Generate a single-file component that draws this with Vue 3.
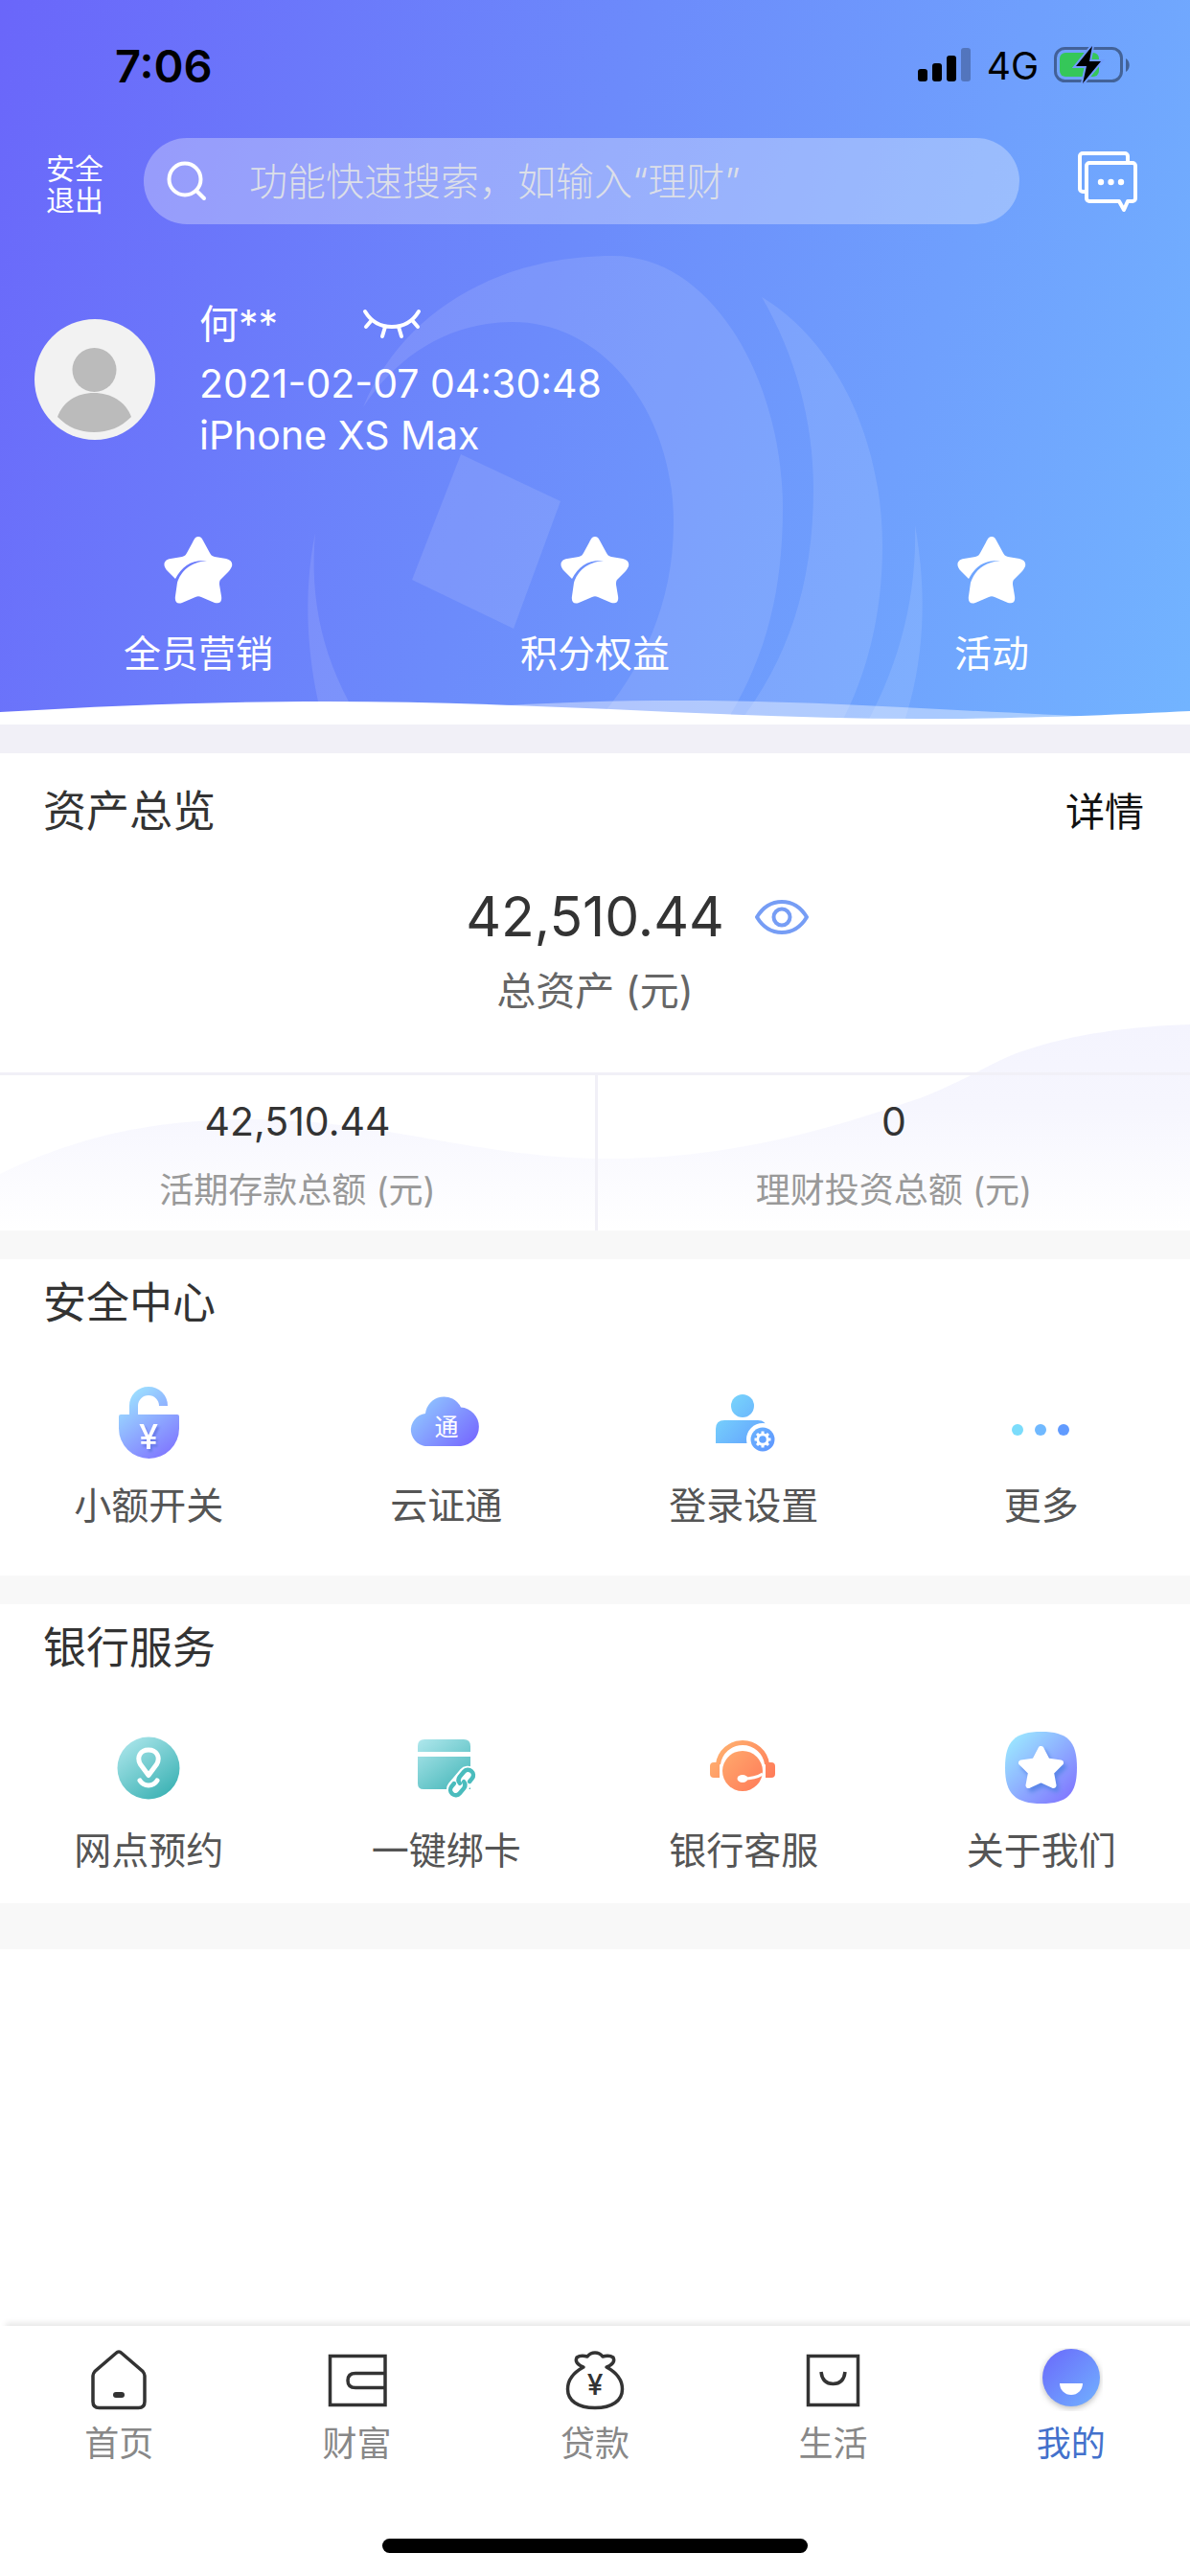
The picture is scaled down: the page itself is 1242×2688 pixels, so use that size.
<template>
  <div class="page">
    <!-- 图标共用的渐变 -->
    <svg class="defs" aria-hidden="true">
      <defs>
        <linearGradient id="g-purple" x1="0" y1="0" x2="1" y2="1">
          <stop offset="0" stop-color="#9ef2ff" />
          <stop offset="1" stop-color="#7e6cff" />
        </linearGradient>
        <linearGradient id="g-lock" gradientUnits="userSpaceOnUse" x1="16" y1="6" x2="64" y2="70">
          <stop offset="0" stop-color="#9ee6ff" />
          <stop offset="1" stop-color="#8078ff" />
        </linearGradient>
        <linearGradient id="g-cloud" gradientUnits="userSpaceOnUse" x1="16" y1="16" x2="66" y2="64">
          <stop offset="0" stop-color="#8fc4ff" />
          <stop offset="1" stop-color="#7669ff" />
        </linearGradient>
        <linearGradient id="g-blue" gradientUnits="userSpaceOnUse" x1="14" y1="12" x2="70" y2="66">
          <stop offset="0" stop-color="#7bdcfb" />
          <stop offset="1" stop-color="#5f98ff" />
        </linearGradient>
        <linearGradient id="g-teal" gradientUnits="userSpaceOnUse" x1="16" y1="10" x2="60" y2="70">
          <stop offset="0" stop-color="#aae5ea" />
          <stop offset="1" stop-color="#3cb2b4" />
        </linearGradient>
        <linearGradient id="g-orange" gradientUnits="userSpaceOnUse" x1="14" y1="16" x2="64" y2="64">
          <stop offset="0" stop-color="#ffb06f" />
          <stop offset="1" stop-color="#ff7858" />
        </linearGradient>
        <linearGradient id="g-mine" x1="0" y1="0" x2="1" y2="1">
          <stop offset="0" stop-color="#6a68fb" />
          <stop offset="1" stop-color="#71b2ff" />
        </linearGradient>
      </defs>
    </svg>

    <header class="header">
      <svg class="header-bg" viewBox="0 0 1242 756" preserveAspectRatio="none" aria-hidden="true">
        <g fill="#fff" fill-opacity="0.11">
          <path d="M379 425C420 325 520 267 640 267C745 267 817 400 817 530C817 620 798 690 756 756H620C670 700 703 630 703 545C703 430 630 336 535 336C470 336 415 370 379 425Z" />
          <path d="M795 310C870 355 921 455 921 570C921 640 905 705 877 756H770C822 690 849 610 849 510C849 440 830 370 795 310Z" />
          <path d="M481 474L585 523L536 656L430 605Z" />
          <path d="M329 556C316 620 320 690 338 756H378C336 690 323 625 329 556Z" />
          <path d="M955 548C968 620 965 690 943 756H904C940 690 957 620 955 548Z" />
        </g>
        <path d="M500 738C640 728 780 730 900 736C1000 741 1080 745 1160 749L960 756H500Z" fill="#fff" fill-opacity="0.4" />
        <path d="M0 743C120 736 220 732 340 732C560 732 760 750 960 750C1070 750 1160 746 1242 742V756H0Z" fill="#fff" />
      </svg>

      <div class="status">
        <span class="time">7:06</span>
        <div class="status-right">
          <svg width="56" height="36" viewBox="0 0 56 36" aria-hidden="true">
            <rect x="0" y="22" width="10" height="13" rx="3" />
            <rect x="15" y="16" width="10" height="19" rx="3" />
            <rect x="30" y="8" width="10" height="27" rx="3" />
            <rect x="45" y="0" width="10" height="35" rx="3" fill-opacity="0.25" />
          </svg>
          <span class="net">4G</span>
          <svg width="80" height="40" viewBox="0 0 80 40" aria-hidden="true">
            <rect x="1.5" y="2.5" width="69" height="34" rx="10" fill="none" stroke="#000" stroke-opacity="0.4" stroke-width="3" />
            <rect x="6" y="7" width="41" height="25" rx="6" fill="#35c759" />
            <path d="M75 13c5 3 5 11 0 14z" fill-opacity="0.4" />
            <path d="M40 0L23 21h11l-4 18 19-23H37z" stroke="#6f9cfd" stroke-width="4" paint-order="stroke" />
          </svg>
        </div>
      </div>

      <div class="search-row">
        <button type="button" class="logout">安全<br />退出</button>
        <div class="search">
          <label for="search" aria-label="搜索">
            <svg width="42" height="42" viewBox="0 0 42 42" fill="none" stroke="#fff" stroke-width="4" stroke-linecap="round" aria-hidden="true">
              <circle cx="19" cy="19" r="16.5" />
              <path d="M31 31L39 39" />
            </svg>
          </label>
          <input id="search" v-model="keyword" type="text" placeholder="功能快速搜索，如输入“理财”" />
        </div>
        <button type="button" class="message" aria-label="消息">
          <svg width="64" height="64" viewBox="0 0 64 64" fill="none" stroke="#fff" stroke-width="4" stroke-linejoin="round" aria-hidden="true">
            <path d="M9 43H6a3 3 0 0 1-3-3V6a3 3 0 0 1 3-3H50a3 3 0 0 1 3 3v6" />
            <path d="M13 13H58a3 3 0 0 1 3 3V50a3 3 0 0 1-3 3H53L49 62L44 53H13a3 3 0 0 1-3-3V16a3 3 0 0 1 3-3z" />
            <g fill="#fff" stroke="none">
              <circle cx="25" cy="33" r="3.2" />
              <circle cx="35.5" cy="33" r="3.2" />
              <circle cx="46" cy="33" r="3.2" />
            </g>
          </svg>
        </button>
      </div>

      <div class="profile">
        <svg class="avatar" width="126" height="126" viewBox="0 0 126 126" aria-hidden="true">
          <circle cx="63" cy="63" r="63" fill="#f2f2f2" />
          <circle cx="62.5" cy="53" r="23" fill="#bbb" />
          <path d="M24 102C30 86 44 77 62 77S95 86 101 102C90 113 77 118 62 118S35 113 24 102Z" fill="#bbb" />
        </svg>
        <div class="profile-info">
          <div class="name">
            <span>何**</span>
            <button type="button" aria-label="显示姓名" @click="showName = !showName">
              <svg width="62" height="32" viewBox="0 0 62 32" fill="none" stroke="#fff" stroke-width="4" stroke-linecap="round" aria-hidden="true">
                <path d="M3 3C9 13 19 19 31 19S53 13 59 3M10 12L4 19M24 19L21 29M38 19L41 29M52 12L58 19" />
              </svg>
            </button>
          </div>
          <div>2021-02-07 04:30:48</div>
          <div>iPhone XS Max</div>
        </div>
      </div>

      <div class="quick">
        <button v-for="item in quickList" :key="item" type="button">
          <svg width="72" height="70" viewBox="0 0 72 70" fill="#fff" aria-hidden="true">
            <path d="M36 0C39 0 40 2 42 6L48 17C49 19 50 20 53 21L65 23C70 24 72 27 71 31C70 33 69 35 67 37L59 45C58 46 58 48 58 50L60 62C61 68 58 70 53 69L39 63C37 62 35 62 33 63L19 69C14 71 11 68 12 62L14 48C18 36 27 27 45 25C28 24 19 31 12 44L4 36C-2 30 0 24 7 23L19 21C22 20 23 19 24 17L30 6C32 2 33 0 36 0Z" />
          </svg>
          <span>{{ item }}</span>
        </button>
      </div>
    </header>

    <section class="assets">
      <svg class="assets-bg" viewBox="0 0 1242 215" preserveAspectRatio="none" aria-hidden="true">
        <defs>
          <linearGradient id="g-assets" x1="0" y1="0" x2="0" y2="1">
            <stop offset="0" stop-color="#f4f4fe" />
            <stop offset="0.4" stop-color="#f6f6fe" />
            <stop offset="1" stop-color="#fff" />
          </linearGradient>
        </defs>
        <path d="M0 156C80 117 160 99 261 99C400 99 500 140 634 140C780 140 890 100 960 77C1010 58 1040 36 1070 27C1120 10 1180 2 1242 0V215H0Z" fill="url(#g-assets)" />
      </svg>
      <div class="assets-head">
        <h2>资产总览</h2>
        <a href="#detail">详情</a>
      </div>
      <div class="total">
        <span class="total-num">42,510.44</span>
        <button type="button" class="eye" aria-label="隐藏金额">
          <svg width="56" height="36" viewBox="0 0 56 36" fill="none" stroke="#769df5" stroke-width="4" aria-hidden="true">
            <path d="M2 18C8 8 17 2 28 2S48 8 54 18C48 28 39 34 28 34S8 28 2 18Z" stroke-linejoin="round" />
            <circle cx="28" cy="18" r="8.5" />
          </svg>
        </button>
      </div>
      <p class="total-label">总资产 (元)</p>
      <div class="split">
        <div v-for="item in assetList" :key="item.label" class="split-item">
          <strong>{{ item.value }}</strong>
          <span>{{ item.label }}</span>
        </div>
      </div>
    </section>

    <section v-for="group in groups" :key="group.title" class="group">
      <h2>{{ group.title }}</h2>
      <div class="grid">
        <button v-for="item in group.items" :key="item.name" type="button">
          <svg width="80" height="80" viewBox="0 0 80 80" aria-hidden="true" v-html="icons[item.icon]"></svg>
          <span>{{ item.name }}</span>
        </button>
      </div>
    </section>
    <div class="end"></div>

    <nav class="tabbar">
      <div class="tabs">
        <button v-for="tab in tabs" :key="tab.name" type="button" :class="{ active: tab.name === current }"
          @click="current = tab.name">
          <svg width="66" height="66" viewBox="0 0 66 66" fill="none" stroke="#333" stroke-width="3.5" aria-hidden="true"
            v-html="icons[tab.icon]"></svg>
          <span>{{ tab.name }}</span>
        </button>
      </div>
      <div class="home-bar"></div>
    </nav>
  </div>
</template>

<script setup>
import { ref } from 'vue'

const keyword = ref('')
const showName = ref(false)
const current = ref('我的')

const quickList = ['全员营销', '积分权益', '活动']

const assetList = [
  { value: '42,510.44', label: '活期存款总额 (元)' },
  { value: '0', label: '理财投资总额 (元)' }
]

const groups = [
  {
    title: '安全中心',
    items: [
      { name: '小额开关', icon: 'lock' },
      { name: '云证通', icon: 'cloud' },
      { name: '登录设置', icon: 'user' },
      { name: '更多', icon: 'more' }
    ]
  },
  {
    title: '银行服务',
    items: [
      { name: '网点预约', icon: 'pin' },
      { name: '一键绑卡', icon: 'card' },
      { name: '银行客服', icon: 'headset' },
      { name: '关于我们', icon: 'star' }
    ]
  }
]

const tabs = [
  { name: '首页', icon: 'home' },
  { name: '财富', icon: 'wallet' },
  { name: '贷款', icon: 'loan' },
  { name: '生活', icon: 'life' },
  { name: '我的', icon: 'mine' }
]

// 齿轮的八个齿
const teeth = [0, 45, 90, 135, 180, 225, 270, 315]
  .map((deg) => `<path d="M60 51.5V48.5" transform="rotate(${deg} 60 57)"/>`)
  .join('')

const icons = {
  lock: `<path d="M24.5 33V22A15.5 15.5 0 0 1 55.5 22" fill="none" stroke="url(#g-lock)" stroke-width="9"/>
    <path d="M11 31H70Q72 31 72 33V45.5A31.5 31.5 0 0 1 9 45.5V33Q9 31 11 31Z" fill="url(#g-lock)"/>
    <text x="40" y="67" text-anchor="middle" font-family="Inter" font-size="36" font-weight="500" fill="#fff" style="filter:drop-shadow(2px 3px 1px #6a7be8)">¥</text>`,
  cloud: `<path d="M22 64A17 17 0 0 1 18 30A19.5 19.5 0 0 1 55 23.5A20.3 20.3 0 0 1 55 64Z" fill="url(#g-cloud)"/>
    <text x="40" y="53" text-anchor="middle" font-family="Noto Sans CJK SC" font-size="25" font-weight="400" fill="#fff">通</text>`,
  user: `<circle cx="39" cy="22" r="12" fill="url(#g-blue)"/>
    <path d="M20 37H55Q64 37 64 46V61H11V46Q11 37 20 37Z" fill="url(#g-blue)"/>
    <circle cx="60" cy="57" r="17" fill="#fff"/><circle cx="60" cy="57" r="12.5" fill="url(#g-blue)"/>
    <circle cx="60" cy="57" r="5.2" fill="none" stroke="#fff" stroke-width="2.8"/>
    <g stroke="#fff" stroke-width="3">${teeth}</g>`,
  more: `<circle cx="15" cy="47" r="6" fill="#7bdcfb"/><circle cx="39" cy="47" r="6" fill="#70b9ff"/><circle cx="63" cy="47" r="6" fill="#619bff"/>`,
  pin: `<circle cx="40" cy="40" r="32.5" fill="url(#g-teal)"/>
    <g fill="none" stroke="#fff" stroke-width="5" stroke-linejoin="round" stroke-linecap="round">
    <path d="M40 47.5L31.5 36C27 28 32 21 40 21S53 28 48.5 36Z"/><path d="M31 53C35 59.500 45 59.500 49 53"/></g>`,
  card: `<path d="M17 10H58Q65 10 65 17V23H10V17Q10 10 17 10ZM10 28H65V62H16Q10 62 10 56Z" fill="url(#g-teal)"/>
    <g fill="none" transform="rotate(-50 56 55)"><rect x="41" y="49.5" width="30" height="11" rx="5.5" fill="#fff" stroke="#fff" stroke-width="9"/>
    <g stroke="#4abcbd" stroke-width="4.5" stroke-linecap="round"><path d="M50 49.500H46A5.500 5.500 0 0 0 46 60.500H53A5.500 5.500 0 0 0 58 56"/><path d="M62 60.500H66A5.500 5.500 0 0 0 66 49.500H59A5.500 5.500 0 0 0 54 54"/></g></g>`,
  headset: `<path d="M13.5 36A25.7 25.7 0 0 1 64.5 36" fill="none" stroke="url(#g-orange)" stroke-width="5"/>
    <path d="M9 34H15V50H9Q5 50 5 46V38Q5 34 9 34ZM63 34H69Q73 34 73 38V46Q73 50 69 50H63Z" fill="url(#g-orange)"/>
    <circle cx="39" cy="43" r="21" fill="url(#g-orange)"/>
    <path d="M39 51C46 51 54 50 60 46" fill="none" stroke="#fff" stroke-width="3"/><ellipse cx="39" cy="51" rx="5.5" ry="4" fill="#fff"/>`,
  star: `<path d="M40 2C67 2 77 12 77 39.5S67 77 40 77S2 67 2 39.5S12 2 40 2Z" fill="url(#g-purple)"/>
    <path d="M39.5 20L46 32.500L60 34.500L50 44.500L52.500 58L39.500 52L26.500 58L29 44.500L19 34.500L33 32.500Z" fill="#fff" stroke="#fff" stroke-width="6" stroke-linejoin="round" style="filter:drop-shadow(3px 4px 2px #5b86e8)"/>`,
  home: `<path d="M30 5.5Q33 2.5 36 5.5L58 24.5Q60 27 60 29V56Q60 62.5 53.5 62.5H12.5Q6 62.5 6 56V29Q6 27 8 24.5Z"/>
    <rect x="27" y="46" width="12" height="6" rx="3" fill="#333" stroke="none"/>`,
  wallet: `<path d="M4.5 8.5H62V59.5H4.5ZM62 26.5H31Q23 26.5 23 34T31 41.5H62"/>`,
  loan: `<path d="M21 20C10 26 4.5 34 4.5 43C4.5 55 15 62.5 33 62.5S61.5 55 61.5 43C61.5 34 56 26 45 20Q55 16 52 10Q48 7 41 9Q38 5 33 5T25 9Q18 7 14 10Q11 16 21 20Z" stroke-linejoin="round"/>
    <text x="33" y="49" text-anchor="middle" font-family="Inter" font-size="30" font-weight="500" fill="#333" stroke="none">¥</text>`,
  life: `<path d="M7.5 8.5H59.5V59.5H7.5Z"/><path d="M21 25C22 34 27 37.5 33.5 37.5S45 34 46 25"/>`,
  mine: `<circle cx="33" cy="31" r="30" fill="url(#g-mine)" stroke="none" style="filter:drop-shadow(0 2px 3px #bbb)"/>
    <path d="M21 37H45A12 12 0 0 1 21 37Z" fill="#fff" stroke="none"/>`
}
</script>

<style>
body {
  margin: 0;
  background: #fff;
}
</style>

<style scoped>
.page {
  display: flex;
  flex-direction: column;
  min-height: 100vh;
  font-family: Inter, "Noto Sans CJK SC", sans-serif;
  color: #333;
}

.defs {
  position: absolute;
  width: 0;
  height: 0;
}

svg {
  display: block;
  flex-shrink: 0;
}

button {
  padding: 0;
  border: 0;
  background: none;
  font: inherit;
  color: inherit;
}

h2,
p {
  margin: 0;
  font-weight: inherit;
}

.header {
  position: relative;
  padding-bottom: 44px;
  background: linear-gradient(108deg, #6a66fa 0%, #6c8bfb 46%, #72b4ff 100%);
  color: #fff;
}

.header-bg {
  position: absolute;
  inset: 0;
  width: 100%;
  height: 100%;
}

.header > div {
  position: relative;
}

.status {
  display: flex;
  align-items: center;
  justify-content: space-between;
  height: 136px;
  padding: 0 62px 0 120px;
  color: #000;
}

.time {
  font-size: 47px;
  font-weight: 600;
}

.status-right {
  display: flex;
  align-items: center;
  gap: 16px;
  font-size: 39px;
}

.search-row {
  display: flex;
  align-items: center;
  margin-top: 8px;
  padding: 0 54px 0 48px;
}

.logout {
  width: 60px;
  padding-top: 8px;
  font-size: 30px;
  line-height: 33px;
}

.search {
  display: flex;
  flex: 1;
  align-items: center;
  gap: 44px;
  height: 90px;
  margin: 0 60px 0 42px;
  padding: 0 24px;
  border-radius: 45px;
  background: rgba(255, 255, 255, 0.3);
}

.search input {
  flex: 1;
  min-width: 0;
  padding: 0;
  border: 0;
  outline: 0;
  background: none;
  font: inherit;
  font-size: 40px;
  font-weight: 300;
  color: #fff;
}

.search input::placeholder {
  color: #dcdfe8;
  opacity: 1;
}

.profile {
  display: flex;
  align-items: center;
  gap: 46px;
  margin-top: 77px;
  padding-left: 36px;
}

.profile-info {
  font-size: 41px;
  line-height: 54px;
}

.name {
  display: flex;
  align-items: center;
  gap: 88px;
  margin-bottom: 8px;
}

.quick {
  display: grid;
  grid-template-columns: repeat(3, 1fr);
  margin-top: 79px;
}

.quick button {
  display: flex;
  flex-direction: column;
  align-items: center;
  gap: 22px;
  font-size: 39px;
  line-height: 60px;
}

.assets {
  position: relative;
  border-top: 30px solid #f1f0f7;
}

.assets-bg {
  position: absolute;
  bottom: 0;
  width: 100%;
  height: 215px;
}

.assets > div,
.assets > p {
  position: relative;
}

.assets-head {
  display: flex;
  align-items: center;
  justify-content: space-between;
  padding: 31px 48px 29px 45px;
  line-height: 60px;
}

h2 {
  font-size: 45px;
}

.assets-head a {
  font-size: 41px;
  color: #111;
  text-decoration: none;
}

.total {
  display: grid;
  grid-template-columns: 1fr auto 1fr;
  align-items: center;
  gap: 32px;
  margin-top: 15px;
  font-size: 57px;
  line-height: 72px;
}

.total-num {
  grid-column: 2;
}

.total-label {
  margin: 11px 0 55px;
  font-size: 41px;
  line-height: 60px;
  text-align: center;
  color: #666;
}

.split {
  display: grid;
  grid-template-columns: 1fr 1fr;
  border-top: 3px solid #f1f0f7;
}

.split-item {
  display: flex;
  flex-direction: column;
  align-items: center;
  gap: 24px;
  padding: 24px 0 18px;
  line-height: 48px;
}

.split-item + .split-item {
  border-left: 3px solid #f1f0f7;
}

.split-item strong {
  font-size: 41px;
  font-weight: inherit;
}

.split-item span {
  font-size: 36px;
  color: #999;
}

.group {
  padding: 16px 0 25px;
  border-top: 30px solid #f8f8f8;
}

.group + .group {
  margin-top: 18px;
}

.group h2 {
  padding-left: 45px;
  line-height: 60px;
}

.grid {
  display: grid;
  grid-template-columns: repeat(4, 1fr);
  margin-top: 55px;
}

.grid button {
  display: flex;
  flex-direction: column;
  align-items: center;
  gap: 16px;
  font-size: 39px;
  line-height: 60px;
  color: #555;
}

.end {
  height: 48px;
  background: #f8f8f8;
}

.tabbar {
  margin-top: auto;
  padding-bottom: 24px;
  background: #fff;
  box-shadow: 6px -3px 6px rgba(0, 0, 0, 0.1);
}

.tabs {
  display: grid;
  grid-template-columns: repeat(5, 1fr);
  padding-top: 23px;
}

.tabs button {
  display: flex;
  flex-direction: column;
  align-items: center;
  gap: 4px;
  font-size: 36px;
  line-height: 60px;
  color: #888;
}

.tabs .active {
  color: #4371cc;
}

.home-bar {
  width: 444px;
  height: 15px;
  margin: 69px auto 0;
  border-radius: 8px;
  background: #000;
}
</style>
